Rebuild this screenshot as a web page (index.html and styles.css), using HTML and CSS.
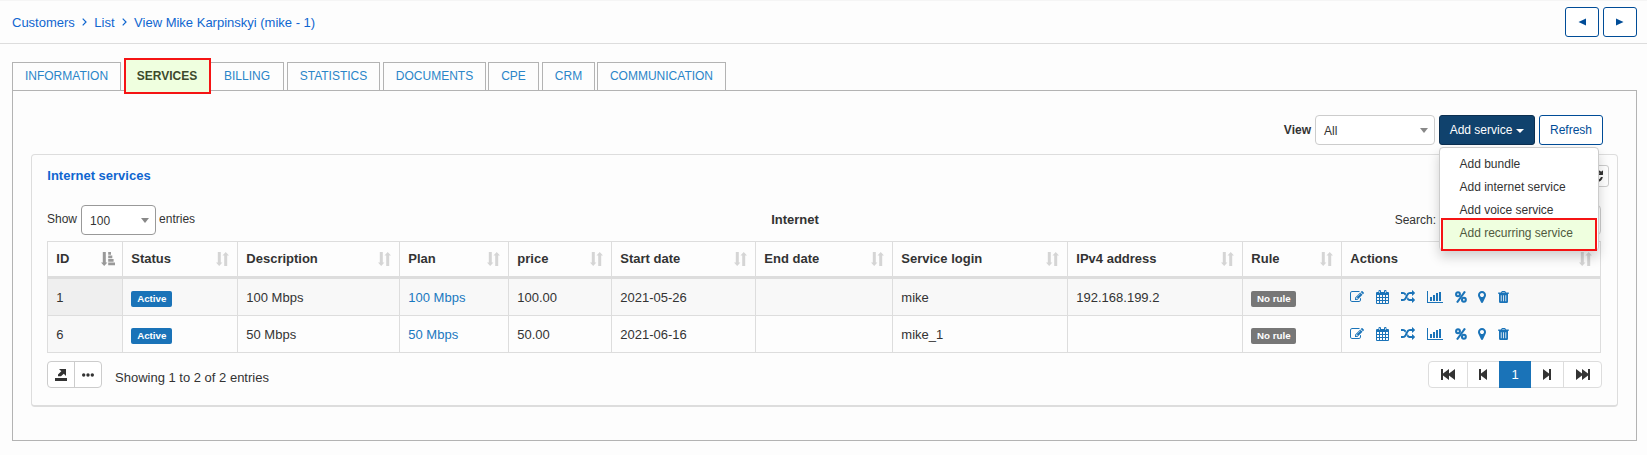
FILE: index.html
```html
<!DOCTYPE html>
<html lang="en">
<head>
<meta charset="utf-8">
<title>View Mike Karpinskyi</title>
<link rel="stylesheet" href="styles.css">
</head>
<body>
<svg class="defs" width="0" height="0">
  <symbol id="edit" viewBox="0 0 1792 1792"><path d="M888 1184l116-116-152-152-116 116v56h96v96h56zm440-720q-16-16-33 1l-350 350q-17 17-1 33t33-1l350-350q17-17 1-33zm80 594v190q0 119-84.500 203.500t-203.500 84.500h-832q-119 0-203.500-84.500t-84.500-203.500v-832q0-119 84.500-203.500t203.500-84.500h832q63 0 117 25 15 7 18 23 3 17-9 29l-49 49q-14 14-32 8-23-6-45-6h-832q-66 0-113 47t-47 113v832q0 66 47 113t113 47h832q66 0 113-47t47-113v-126q0-13 9-22l64-64q15-15 35-7t20 29zm-96-738l288 288-672 672h-288v-288zm444 132l-92 92-288-288 92-92q28-28 68-28t68 28l152 152q28 28 28 68t-28 68z"/></symbol>
  <symbol id="calendar" viewBox="0 0 13 14"><path fill-rule="evenodd" d="M1 2h1.500V1q0-1 1-1h.5q1 0 1 1v1h3V1q0-1 1-1h.5q1 0 1 1v1H12q1 0 1 1v10q0 1-1 1H1q-1 0-1-1V3q0-1 1-1zM1 5v2h2V5zM4 5v2h2V5zM7 5v2h2V5zM10 5v2h2V5zM1 8v2h2V8zM4 8v2h2V8zM7 8v2h2V8zM10 8v2h2V8zM1 11v2h2v-2zM4 11v2h2v-2zM7 11v2h2v-2zM10 11v2h2v-2zM3.300 1v2h.6V1zM9.200 1v2h.6V1z"/></symbol>
  <symbol id="random" viewBox="0 0 1792 1792"><path d="M666 481q-60 92-137 273-22-45-37-72.500t-40.500-63.500-51-56.500-63-35-81.500-14.500h-224q-14 0-23-9t-9-23v-192q0-14 9-23t23-9h224q250 0 410 225zm1126 799q0 14-9 23l-320 320q-9 9-23 9-13 0-22.500-9.500t-9.500-22.500v-192q-32 0-85 .5t-81 1-73-1-71-5-64-10.500-63-18.500-58-28.500-59-40-55-53.500-56-69.500q59-93 136-273 22 45 37 72.500t40.500 63.500 51 56.500 63 35 81.500 14.500h256v-192q0-14 9-23t23-9q12 0 24 10l319 319q9 9 9 23zm0-896q0 14-9 23l-320 320q-9 9-23 9-13 0-22.500-9.500t-9.500-22.500v-192h-256q-48 0-87 15t-69 45-51 61.500-45 77.500q-32 62-78 171-29 66-49.500 111t-54 105-64 100-74 83-90 68.500-106.500 42-128 16.500h-224q-14 0-23-9t-9-23v-192q0-14 9-23t23-9h224q48 0 87-15t69-45 51-61.500 45-77.500q32-62 78-171 29-66 49.500-111t54-105 64-100 74-83 90-68.500 106.500-42 128-16.500h256v-192q0-14 9-23t23-9q12 0 24 10l319 319q9 9 9 23z"/></symbol>
  <symbol id="chart" viewBox="0 0 16 14"><path d="M0 1h1v11h15v1H0zM3 7h2v4H3zM6 5h2v6H6zM9 3h2v8H9zM12 2h2v9h-2z"/></symbol>
  <symbol id="percent" viewBox="0 0 12 12"><g fill="none" stroke="currentColor" stroke-width="2.100"><ellipse cx="3" cy="3.200" rx="1.900" ry="2"/><ellipse cx="8.900" cy="8.800" rx="1.900" ry="2"/><path d="M10 .5 2 11.500"/></g></symbol>
  <symbol id="marker" viewBox="384 0 1024 1792"><path d="M1152 640q0-106-75-181t-181-75-181 75-75 181 75 181 181 75 181-75 75-181zm256 0q0 109-33 179l-364 774q-16 33-47.500 52t-67.500 19-67.500-19-46.500-52l-365-774q-33-70-33-179 0-212 150-362t362-150 362 150 150 362z"/></symbol>
  <symbol id="trash" viewBox="0 0 11 12"><path fill-rule="evenodd" d="M3 1.500 3.500.5Q3.700 0 4.300 0h2.400q.6 0 .8.500l.5 1h2.500q.5 0 .5.500v.8h-1V10.500q0 1.500-1.200 1.500H2.200Q1 12 1 10.500V2.800H0V2q0-.5.500-.5zM4 1.500h3L6.600.9H4.400zM2.800 4.200v6h.8v-6zM5.100 4.200v6h.8v-6zM7.400 4.200v6h.8v-6z"/></symbol>
  <symbol id="refresh" viewBox="128 128 1536 1536"><path d="M1639 1056q0 5-1 7-64 268-268 434.500t-478 166.500q-146 0-282.500-55t-243.500-157l-129 129q-19 19-45 19t-45-19-19-45v-448q0-26 19-45t45-19h448q26 0 45 19t19 45-19 45l-137 137q71 66 161 102t187 36q134 0 250-65t186-179q11-17 53-117 8-23 30-23h192q13 0 22.500 9.500t9.500 22.500zm25-800v448q0 26-19 45t-45 19h-448q-26 0-45-19t-19-45 19-45l138-138q-148-137-349-137-134 0-250 65t-186 179q-11 17-53 117-8 23-30 23h-199q-13 0-22.500-9.500t-9.500-22.500v-7q65-268 270-434.500t480-166.500q146 0 284 55.500t245 156.500l130-129q19-19 45-19t45 19 19 45z"/></symbol>
  <symbol id="sort" viewBox="0 0 13 14"><path d="M1.800 0h3v10.500H6.400L3.200 14 0 10.500h1.800zM8.200 14h3V3.500H13L9.700 0 6.500 3.500h1.700z"/></symbol>
  <symbol id="sort-asc" viewBox="0 0 14 14"><path d="M1.800 0h3v10.500H6.400L3.200 14 0 10.500h1.800zM7.200 0H10v2.800H7.200zM7.200 3.500H11.300V6.300H7.200zM7.200 7h5.400v2.800H7.200zM7.200 10.500H14V13.300H7.200z"/></symbol>
  <symbol id="export" viewBox="0 0 12 12"><path d="M4 0h7v7L8.800 4.800 6 7.300H3V5.500L6.300 2.300zM0 9h12v3H0z"/></symbol>
  <symbol id="dots" viewBox="0 0 12 4"><circle cx="1.700" cy="2" r="1.700"/><circle cx="6" cy="2" r="1.700"/><circle cx="10.300" cy="2" r="1.700"/></symbol>
  <symbol id="prev" viewBox="0 0 8 11"><path d="M0 0h2v4.500L8 0v11L2 6.500V11H0z"/></symbol>
  <symbol id="first" viewBox="0 0 14 11"><path d="M0 0h2v4.500L8 0v4.500L14 0v11L8 6.500V11L2 6.500V11H0z"/></symbol>
</svg>

<header class="topbar">
  <nav class="crumbs">
    <a>Customers</a><svg class="chev" viewBox="0 0 5 8"><path d="M.7.7 4 4 .7 7.300"/></svg><a>List</a><svg class="chev" viewBox="0 0 5 8"><path d="M.7.7 4 4 .7 7.300"/></svg><a>View Mike Karpinskyi (mike - 1)</a>
  </nav>
  <div class="pager">
    <button class="btn"><svg width="8" height="8" viewBox="0 0 8 8"><path d="M8 .5v7L.5 4z"/></svg></button>
    <button class="btn"><svg width="8" height="8" viewBox="0 0 8 8"><path d="M0 .5v7L7.500 4z"/></svg></button>
  </div>
</header>

<main>
  <ul class="tabs">
    <li class="t1">INFORMATION</li><li class="active">SERVICES</li><li class="t3">BILLING</li><li class="t4">STATISTICS</li><li class="t5">DOCUMENTS</li><li class="t6">CPE</li><li class="t7">CRM</li><li class="t8">COMMUNICATION</li>
  </ul>
  <section class="panel">
    <div class="toolbar">
      <b>View</b>
      <div class="select view">All<i class="caret"></i></div>
      <div class="dropdown">
        <button class="btn primary">Add service<i class="caret"></i></button>
        <ul class="menu">
          <li>Add bundle</li><li>Add internet service</li><li>Add voice service</li><li class="hot">Add recurring service</li>
        </ul>
      </div>
      <button class="btn refresh">Refresh</button>
    </div>

    <div class="card">
      <div class="card-head"><h2>Internet services</h2><button class="reload"><svg width="12" height="12"><use href="#refresh"/></svg></button></div>
      <div class="filters">
        <div class="length"><span>Show</span><div class="select count">100<i class="caret"></i></div><span>entries</span></div>
        <b>Internet</b>
        <div class="search"><span>Search:</span><input></div>
      </div>
      <table>
        <colgroup><col class="c1"><col class="c2"><col class="c3"><col class="c4"><col class="c5"><col class="c6"><col class="c7"><col class="c8"><col class="c9"><col class="c10"><col class="c11"></colgroup>
        <thead><tr>
          <th><div>ID<svg class="asc"><use href="#sort-asc"/></svg></div></th>
          <th><div>Status<svg><use href="#sort"/></svg></div></th>
          <th><div>Description<svg><use href="#sort"/></svg></div></th>
          <th><div>Plan<svg><use href="#sort"/></svg></div></th>
          <th><div>price<svg><use href="#sort"/></svg></div></th>
          <th><div>Start date<svg><use href="#sort"/></svg></div></th>
          <th><div>End date<svg><use href="#sort"/></svg></div></th>
          <th><div>Service login<svg><use href="#sort"/></svg></div></th>
          <th><div>IPv4 address<svg><use href="#sort"/></svg></div></th>
          <th><div>Rule<svg><use href="#sort"/></svg></div></th>
          <th><div>Actions<svg><use href="#sort"/></svg></div></th>
        </tr></thead>
        <tbody>
          <tr><td>1</td><td><span class="label">Active</span></td><td>100 Mbps</td><td><a>100 Mbps</a></td><td>100.00</td><td>2021-05-26</td><td></td><td>mike</td><td>192.168.199.2</td><td><span class="label gray">No rule</span></td>
            <td><div class="actions"><svg width="14" height="14"><use href="#edit"/></svg><svg width="13" height="14"><use href="#calendar"/></svg><svg width="14" height="14"><use href="#random"/></svg><svg width="16" height="14"><use href="#chart"/></svg><svg width="12" height="12"><use href="#percent"/></svg><svg class="pin" width="8" height="14"><use href="#marker"/></svg><svg width="11" height="12"><use href="#trash"/></svg></div></td></tr>
          <tr><td>6</td><td><span class="label">Active</span></td><td>50 Mbps</td><td><a>50 Mbps</a></td><td>50.00</td><td>2021-06-16</td><td></td><td>mike_1</td><td></td><td><span class="label gray">No rule</span></td>
            <td><div class="actions"><svg width="14" height="14"><use href="#edit"/></svg><svg width="13" height="14"><use href="#calendar"/></svg><svg width="14" height="14"><use href="#random"/></svg><svg width="16" height="14"><use href="#chart"/></svg><svg width="12" height="12"><use href="#percent"/></svg><svg class="pin" width="8" height="14"><use href="#marker"/></svg><svg width="11" height="12"><use href="#trash"/></svg></div></td></tr>
        </tbody>
      </table>
      <div class="table-foot">
        <div class="group tools"><span><svg width="12" height="12"><use href="#export"/></svg></span><span><svg width="12" height="4"><use href="#dots"/></svg></span></div>
        <p>Showing 1 to 2 of 2 entries</p>
        <div class="group pages">
          <span class="wide"><svg width="14" height="11"><use href="#first"/></svg></span><span><svg width="8" height="11"><use href="#prev"/></svg></span><span class="current">1</span><span><svg class="flip" width="8" height="11"><use href="#prev"/></svg></span><span class="wide"><svg class="flip" width="14" height="11"><use href="#first"/></svg></span>
        </div>
      </div>
    </div>
  </section>
</main>
</body>
</html>
```

FILE: styles.css
```css
* { box-sizing: border-box; }
body { margin: 0; background: #fdfdfd; color: #333; font: 12px/18px "Liberation Sans", Arial, sans-serif; }
ul, p, h2 { margin: 0; padding: 0; list-style: none; }
svg { fill: currentColor; flex: none; display: block; }
.defs { position: absolute; }
.topbar { height: 44px; border-top: 1px solid #f5f5f5; border-bottom: 1px solid #ddd; padding: 0 10px 0 12px; display: flex; justify-content: space-between; align-items: center; }
.crumbs { display: flex; align-items: center; font-size: 13px; color: #0f66d0; padding-top: 2px; }
.chev { width: 5px; height: 8px; margin: -2px 7px 0 7.500px; fill: none; stroke: currentColor; stroke-width: 1.200; }
.pager { display: flex; gap: 4px; margin-top: -1px; }
.btn { height: 30px; border: 1px solid #004c97; border-radius: 3px; background: #fff; color: #004c97; font: inherit; display: flex; align-items: center; justify-content: center; padding: 0 0 1px; }
.pager .btn { width: 34px; padding: 0; }
main { padding: 18px 10px 0 12px; }
.tabs { display: flex; height: 28px; color: #2a85c8; }
.tabs li { border: 1px solid #b3b3b3; border-bottom: 0; display: flex; align-items: center; justify-content: center; padding-bottom: 1px; }
.t1 { width: 109px; }
.tabs .active { width: 87px; height: 36px; margin: -4px 0 -4px 3px; border: 2px solid #f51414; background: #efffdf; color: #3d4a2c; font-weight: bold; padding: 0 1px 0 0; z-index: 1; }
.tabs .t3 { width: 73px; border-left: 0; }
.t4 { width: 93px; margin-left: 3px; }
.t5 { width: 103px; margin-left: 3px; }
.t6 { width: 51px; margin-left: 2px; }
.t7 { width: 53px; margin-left: 3px; }
.t8 { width: 129px; margin-left: 2px; }
.panel { height: 351px; border: 1px solid #b3b3b3; padding: 24px 18px; }
.toolbar { height: 30px; display: flex; align-items: center; justify-content: flex-end; gap: 4px; padding-right: 15px; }
.select { height: 30px; border: 1px solid #ccc; border-radius: 4px; background: #fff; display: flex; align-items: center; justify-content: space-between; padding: 2px 6px 0 8px; }
.view { width: 120px; }
.caret { border: 4px solid transparent; border-top: 5px solid #888; border-bottom: 0; }
.select .caret { margin-top: -1px; }
.dropdown { position: relative; }
.primary { width: 96px; background: #10426d; border-color: #0c2f50; color: #fff; gap: 4px; }
.primary .caret { border-top: 4px solid #fff; margin-top: 2px; }
.refresh { width: 64px; }
.menu { position: absolute; left: 0; top: 32px; width: 160px; height: 104px; background: #fff; border: 1px solid #ccc; border-radius: 4px; box-shadow: 0 6px 12px rgba(0,0,0,.18); padding: 5px 1px 0; }
.menu li { height: 23px; line-height: 23px; padding-left: 18.500px; }
.menu .hot { height: 33px; margin-top: -4px; line-height: 27px; padding-left: 16.500px; border: 2px solid #f51414; background: #efffdf; color: #4f5a3e; }
.card { margin-top: 9px; width: 1587px; height: 253px; border: 1px solid #ddd; border-bottom-width: 2px; border-radius: 4px; padding: 10px 15px; }
.card-head { height: 40px; display: flex; justify-content: space-between; }
h2 { font-size: 13px; line-height: 22px; color: #0f66d0; padding-left: .3px; }
.reload { width: 24px; height: 22px; border: 1px solid #ccc; border-radius: 3px; background: #fff; display: flex; align-items: center; justify-content: center; padding: 0; color: #333; margin-right: -7px; }
.filters { height: 30px; display: grid; grid-template-columns: 1fr auto 1fr; align-items: center; width: 1554px; }
.length { display: flex; gap: 4px; }
.length span { line-height: 28px; }
.length div + span { margin-left: -1px; }
.count { width: 75px; border-color: #999; }
.filters > b { font-size: 13px; padding-bottom: 1px; margin: 0 29px 0 -29px; }
.search { display: flex; justify-content: flex-end; align-items: center; gap: 4px; margin-left: -29px; }
.search input { width: 161px; height: 30px; border: 1px solid #ccc; border-radius: 4px; background: #fff; }
table { table-layout: fixed; width: 1554px; margin-top: 6px; border-collapse: separate; border-spacing: 0; border: 1px solid #ddd; border-width: 1px 0 0 1px; font-size: 13px; }
.c1 { width: 75px; } .c2 { width: 115px; } .c3 { width: 162px; } .c4 { width: 109px; } .c5 { width: 103px; } .c6 { width: 144px; } .c7 { width: 137px; } .c8, .c9 { width: 175px; } .c10 { width: 99px; } .c11 { width: 259px; }
th, td { height: 37px; padding: 0 8px 0 8.300px; border: 1px solid #ddd; border-width: 0 1px 1px 0; text-align: left; }
td { padding-top: 2px; }
th { border-bottom-width: 3px; }
th div { display: flex; justify-content: space-between; align-items: center; }
th svg { width: 13px; height: 14px; color: #d5d5d5; margin-top: -1px; }
th .asc { width: 14px; color: #999; margin-right: -1px; }
tbody tr:first-child { background: #f8f8f8; }
td:first-child { background: #f8f8f8; }
tr:first-child td:first-child { background: #efefef; }
td a { color: #1a78c0; }
.label { display: block; width: 41px; height: 16px; margin-top: 1px; border-radius: 2px; background: #1a73b8; color: #fff; font: bold 9.750px/16px "Liberation Sans", Arial, sans-serif; text-align: center; }
.gray { width: 45px; background: #777; }
.actions { display: flex; align-items: center; gap: 12px; color: #1a73b8; margin-top: -2px; }
.pin { margin-left: -1px; }
.table-foot { margin-top: 8px; height: 27px; display: flex; width: 1555px; font-size: 13px; }
.table-foot p { padding: 8px 0 0 13px; flex: 1; }
.group { display: flex; border: 1px solid #ccc; border-radius: 4px; background: #fff; }
.group span { display: flex; align-items: center; justify-content: center; border-left: 1px solid #ccc; }
.group span:first-child { border-left: 0; }
.tools { width: 55px; }
.tools span { width: 27px; }
.pages { border-color: #ddd; width: 174px; }
.pages span { width: 32px; border-color: #ddd; }
.pages .wide { width: 38px; }
.pages .current { width: 33px; margin: -1px 0; background: #1a73b8; color: #fff; border: 0; }
.pages .current + span { border: 0; }
.flip { transform: scaleX(-1); }
```
